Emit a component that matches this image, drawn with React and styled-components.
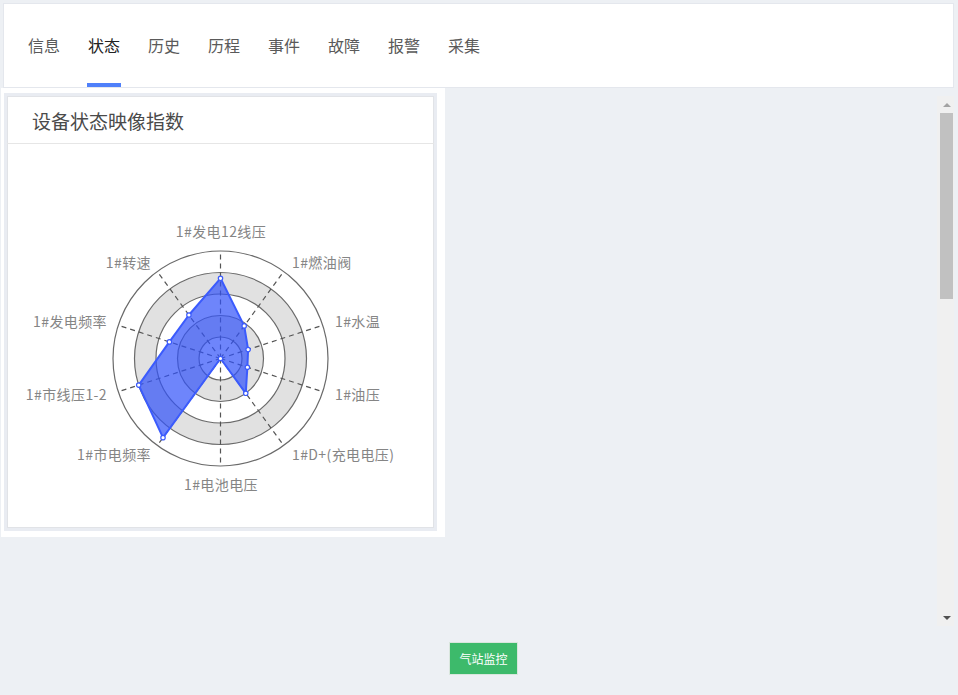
import React from "react";
import styled, { createGlobalStyle } from "styled-components";

const GlobalStyle = createGlobalStyle`
  html, body { margin: 0; padding: 0; }
  body {
    background: #edf0f4;
    font-family: "Noto Sans CJK SC", "Noto Sans", "Liberation Sans", sans-serif;
  }
  * { box-sizing: border-box; }
`;

const Page = styled.div`
  width: 958px;
  height: 695px;
  display: flex;
  flex-direction: column;
  background: #edf0f4;
  overflow: hidden;
`;

const TabBar = styled.nav`
  margin: 3px 4px 0 3px;
  height: 85px;
  background: #fff;
  border: 1px solid #e4e7ed;
  display: flex;
  align-items: stretch;
  padding-left: 10px;
`;

const Tab = styled.div`
  margin: 0 13px;
  padding: 3px 1px 0;
  display: flex;
  align-items: center;
  font-size: 16px;
  color: ${(p) => (p.$active ? "#222" : "#5a5a5a")};
  border-bottom: 4px solid ${(p) => (p.$active ? "#4f80fa" : "transparent")};
  cursor: pointer;
`;

const Body = styled.div`
  height: 554px;
  display: flex;
  align-items: flex-start;
`;

const Content = styled.div`
  flex: 1;
  padding-left: 1px;
`;

const Panel = styled.section`
  width: 444px;
  height: 449px;
  background: #fff;
  padding: 5px 8px 6px 3px;
`;

const Card = styled.div`
  height: 100%;
  border: 3px solid #e9ecf2;
  box-shadow: inset 0 0 0 1px #e1e3e7;
  background: #fff;
  display: flex;
  flex-direction: column;
`;

const CardHeader = styled.header`
  height: 48px;
  flex: none;
  border-bottom: 1px solid #e6e6e6;
  display: flex;
  align-items: center;
  padding: 1px 0 0 25px;
  font-size: 19px;
  color: #4a4a4a;
`;

const ChartBox = styled.div`
  flex: 1;
  display: flex;
`;

const ScrollTrack = styled.div`
  width: 17px;
  height: 530px;
  margin: 8px 4px 0 0;
  background: #f0f0f0;
  display: flex;
  flex-direction: column;
  align-items: stretch;
`;

const ArrowCell = styled.div`
  height: 17px;
  flex: none;
  display: flex;
  justify-content: center;
  align-items: center;
  padding-left: 2px;
`;

const ArrowUp = styled.span`
  width: 0;
  height: 0;
  border-left: 4px solid transparent;
  border-right: 4px solid transparent;
  border-bottom: 4px solid #a3a3a3;
`;

const ArrowDown = styled.span`
  width: 0;
  height: 0;
  border-left: 4px solid transparent;
  border-right: 4px solid transparent;
  border-top: 4px solid #505050;
`;

const Thumb = styled.div`
  margin-left: 3px;
  width: 13px;
  height: 186px;
  background: #c1c1c1;
`;

const TrackSpace = styled.div`
  flex: 1;
`;

const Footer = styled.footer`
  display: flex;
  justify-content: center;
  padding-left: 9px;
`;

const GreenButton = styled.button`
  width: 69px;
  height: 33px;
  background: #3dba6b;
  border: 1px solid #d9e6dd;
  color: #fff;
  font-family: "Noto Sans CJK SC", "Noto Sans", sans-serif;
  font-size: 12px;
  padding: 0;
  cursor: pointer;
`;

const tabs = ["信息", "状态", "历史", "历程", "事件", "故障", "报警", "采集"];

const indicators = [
  { name: "1#发电12线压", v: 0.746, x: 214, y: 87, anchor: "middle" },
  { name: "1#燃油阀", v: 0.375, x: 285, y: 118, anchor: "start" },
  { name: "1#水温", v: 0.27, x: 328, y: 177, anchor: "start" },
  { name: "1#油压", v: 0.263, x: 328, y: 250, anchor: "start" },
  { name: "1#D+(充电电压)", v: 0.4, x: 285, y: 310, anchor: "start" },
  { name: "1#电池电压", v: 0, x: 214, y: 340, anchor: "middle" },
  { name: "1#市电频率", v: 0.91, x: 144, y: 310, anchor: "end" },
  { name: "1#市线压1-2", v: 0.8, x: 100, y: 250, anchor: "end" },
  { name: "1#发电频率", v: 0.5, x: 100, y: 177, anchor: "end" },
  { name: "1#转速", v: 0.5, x: 144, y: 118, anchor: "end" },
];

function Radar() {
  const cx = 213.5;
  const cy = 214.5;
  const R = 107.5;
  const n = indicators.length;
  const ang = (i) => (i * 2 * Math.PI) / n;
  const pt = (i, r) => [cx + r * Math.sin(ang(i)), cy - r * Math.cos(ang(i))];
  const rings = [1, 2, 3, 4, 5].map((k) => (R * k) / 5);
  const pts = indicators.map((d, i) => pt(i, d.v * R));
  const poly = pts.map((p) => p.join(",")).join(" ");

  return (
    <svg width="427" height="384" viewBox="0 0 427 384">
      {[4, 3, 2, 1, 0].map((k) => {
        const rOut = rings[k];
        const rIn = k === 0 ? 0 : rings[k - 1];
        const fill = k % 2 === 1 ? "#e1e1e1" : "#ffffff";
        return (
          <path
            key={"a" + k}
            fillRule="evenodd"
            fill={fill}
            d={`M ${cx - rOut} ${cy} a ${rOut} ${rOut} 0 1 0 ${2 * rOut} 0 a ${rOut} ${rOut} 0 1 0 ${-2 * rOut} 0 Z ${
              rIn > 0
                ? `M ${cx - rIn} ${cy} a ${rIn} ${rIn} 0 1 0 ${2 * rIn} 0 a ${rIn} ${rIn} 0 1 0 ${-2 * rIn} 0 Z`
                : ""
            }`}
          />
        );
      })}
      {rings.map((r, k) => (
        <circle key={"r" + k} cx={cx} cy={cy} r={r} fill="none" stroke="#6a6a6a" strokeWidth="1.2" />
      ))}
      {indicators.map((d, i) => {
        const [x, y] = pt(i, R);
        return (
          <line
            key={"l" + i}
            x1={cx}
            y1={cy}
            x2={x}
            y2={y}
            stroke="#555"
            strokeWidth="1.2"
            strokeDasharray="5 4"
          />
        );
      })}
      <polygon
        points={poly}
        fill="rgba(49,81,249,0.7)"
        stroke="#3b5bfd"
        strokeWidth="2"
        strokeLinejoin="round"
      />
      {pts.map(([x, y], i) => (
        <circle key={"p" + i} cx={x} cy={y} r="2.2" fill="#fff" stroke="#3b5bfd" strokeWidth="1.2" />
      ))}
      {indicators.map((d, i) => (
        <text
          key={"t" + i}
          x={d.x}
          y={d.y}
          textAnchor={d.anchor}
          dominantBaseline="central"
          fontSize="14"
          letterSpacing="0.4"
          fill="#858585"
          fontFamily='"Noto Sans CJK SC", "Noto Sans", sans-serif'
        >
          {d.name}
        </text>
      ))}
    </svg>
  );
}

export default function App() {
  return (
    <>
      <GlobalStyle />
      <Page>
        <TabBar>
          {tabs.map((t) => (
            <Tab key={t} $active={t === "状态"}>
              {t}
            </Tab>
          ))}
        </TabBar>
        <Body>
          <Content>
            <Panel>
              <Card>
                <CardHeader>设备状态映像指数</CardHeader>
                <ChartBox>
                  <Radar />
                </ChartBox>
              </Card>
            </Panel>
          </Content>
          <ScrollTrack>
            <ArrowCell>
              <ArrowUp />
            </ArrowCell>
            <Thumb />
            <TrackSpace />
            <ArrowCell>
              <ArrowDown />
            </ArrowCell>
          </ScrollTrack>
        </Body>
        <Footer>
          <GreenButton>气站监控</GreenButton>
        </Footer>
      </Page>
    </>
  );
}
